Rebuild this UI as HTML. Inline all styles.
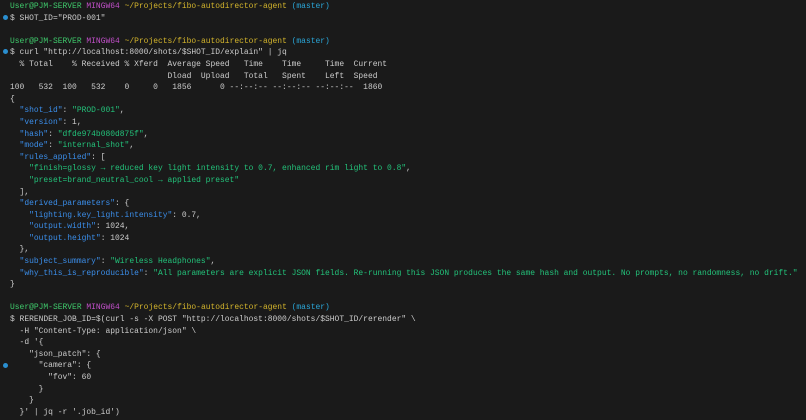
<!DOCTYPE html>
<html><head><meta charset="utf-8"><style>
html,body{margin:0;padding:0;background:#1a1a1a;width:806px;height:420px;overflow:hidden}
pre{margin:0;padding:1px 0 0 10px;font-family:"Liberation Mono",monospace;font-size:7.96px;line-height:11.6px;color:#cccccc;white-space:pre;position:relative}
.u{color:#3fc96b}.m{color:#c04fc8}.p{color:#d4b52c}.c{color:#2aa6d8}
.k{color:#3b8eea}.s{color:#23c27a}
.d{position:absolute;left:3px;width:5px;height:5px;border-radius:50%;background:#2a8fd0}
</style></head><body>
<pre><span class="d" style="top:15px"></span><span class="d" style="top:49px"></span><span class="d" style="top:363px"></span><span class="u">User@PJM-SERVER</span> <span class="m">MINGW64</span> <span class="p">~/Projects/fibo-autodirector-agent</span> <span class="c">(master)</span>
$ SHOT_ID="PROD-001"

<span class="u">User@PJM-SERVER</span> <span class="m">MINGW64</span> <span class="p">~/Projects/fibo-autodirector-agent</span> <span class="c">(master)</span>
$ curl "http://localhost:8000/shots/$SHOT_ID/explain" | jq
  % Total    % Received % Xferd  Average Speed   Time    Time     Time  Current
                                 Dload  Upload   Total   Spent    Left  Speed
100   532  100   532    0     0   1856      0 --:--:-- --:--:-- --:--:--  1860
{
  <span class="k">"shot_id"</span>: <span class="s">"PROD-001"</span>,
  <span class="k">"version"</span>: 1,
  <span class="k">"hash"</span>: <span class="s">"dfde974b080d875f"</span>,
  <span class="k">"mode"</span>: <span class="s">"internal_shot"</span>,
  <span class="k">"rules_applied"</span>: [
    <span class="s">"finish=glossy → reduced key light intensity to 0.7, enhanced rim light to 0.8"</span>,
    <span class="s">"preset=brand_neutral_cool → applied preset"</span>
  ],
  <span class="k">"derived_parameters"</span>: {
    <span class="k">"lighting.key_light.intensity"</span>: 0.7,
    <span class="k">"output.width"</span>: 1024,
    <span class="k">"output.height"</span>: 1024
  },
  <span class="k">"subject_summary"</span>: <span class="s">"Wireless Headphones"</span>,
  <span class="k">"why_this_is_reproducible"</span>: <span class="s">"All parameters are explicit JSON fields. Re-running this JSON produces the same hash and output. No prompts, no randomness, no drift."</span>
}

<span class="u">User@PJM-SERVER</span> <span class="m">MINGW64</span> <span class="p">~/Projects/fibo-autodirector-agent</span> <span class="c">(master)</span>
$ RERENDER_JOB_ID=$(curl -s -X POST "http://localhost:8000/shots/$SHOT_ID/rerender" \
  -H "Content-Type: application/json" \
  -d '{
    "json_patch": {
      "camera": {
        "fov": 60
      }
    }
  }' | jq -r '.job_id')</pre>
</body></html>
